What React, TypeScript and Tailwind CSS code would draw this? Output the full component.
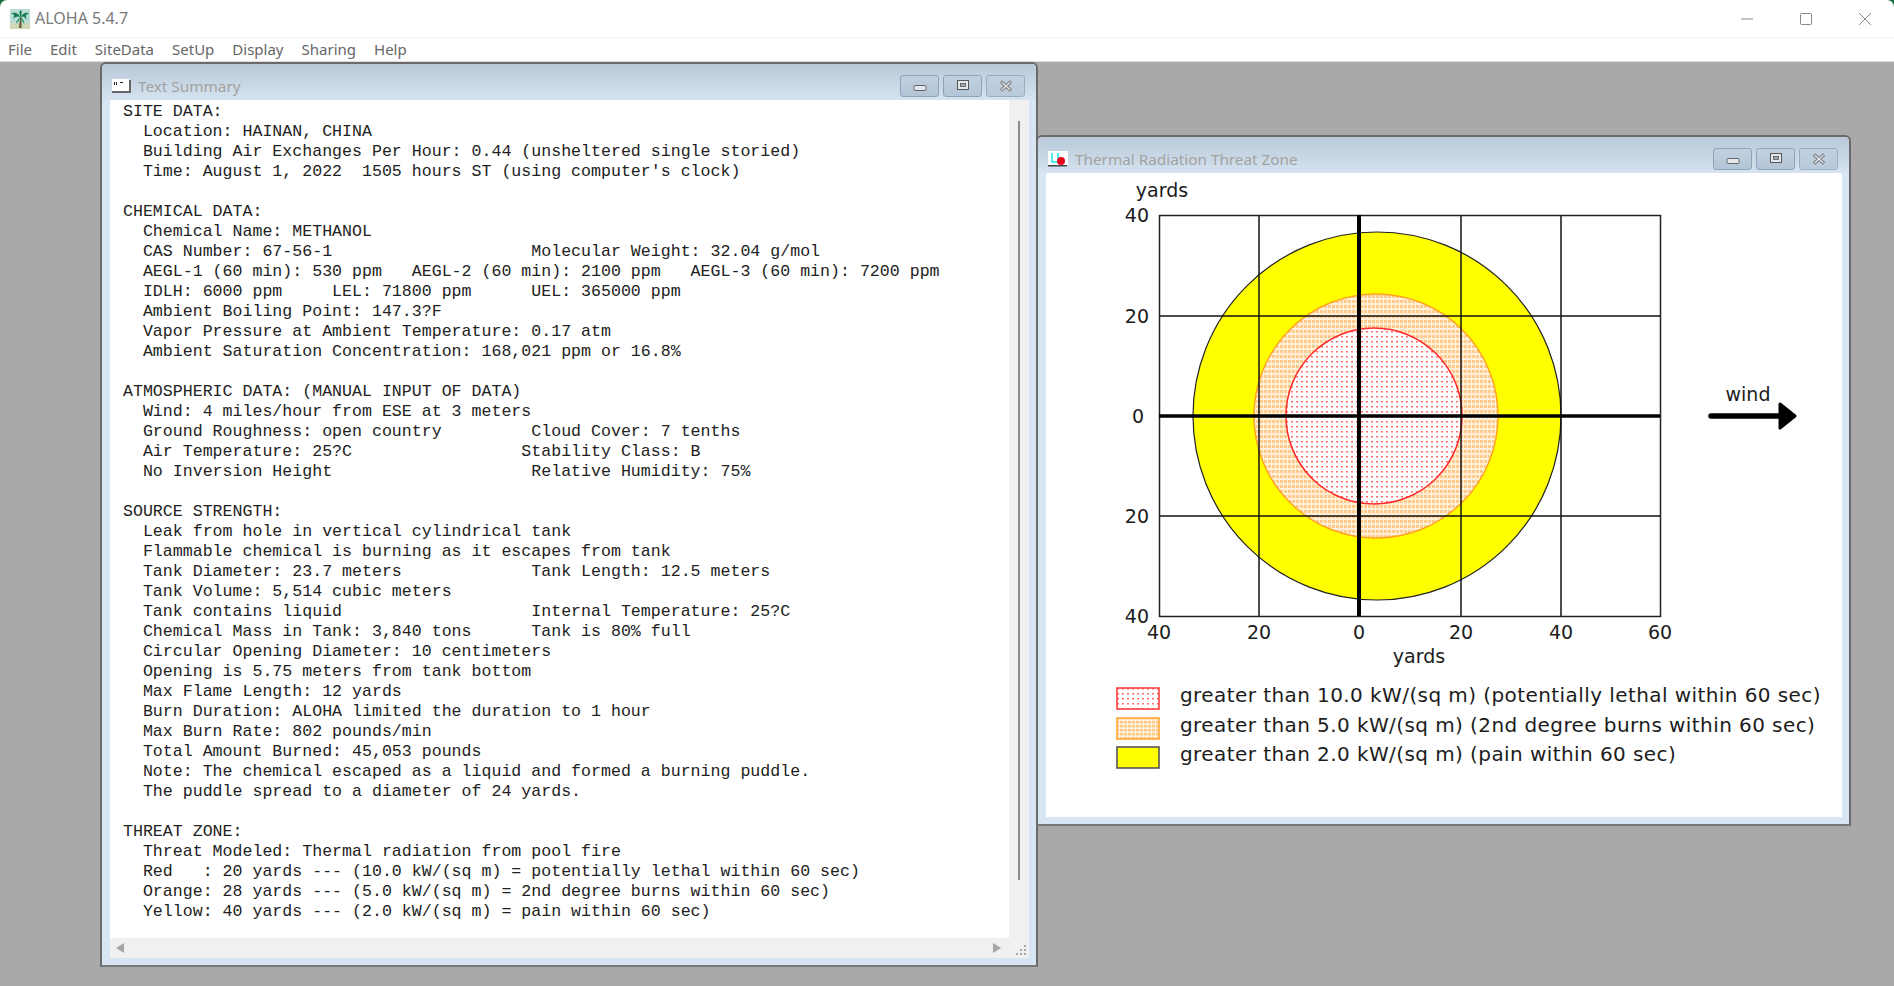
import React from "react";

const SUMMARY = [
  "SITE DATA:",
  "  Location: HAINAN, CHINA",
  "  Building Air Exchanges Per Hour: 0.44 (unsheltered single storied)",
  "  Time: August 1, 2022  1505 hours ST (using computer's clock)",
  "",
  "CHEMICAL DATA:",
  "  Chemical Name: METHANOL",
  "  CAS Number: 67-56-1                    Molecular Weight: 32.04 g/mol",
  "  AEGL-1 (60 min): 530 ppm   AEGL-2 (60 min): 2100 ppm   AEGL-3 (60 min): 7200 ppm",
  "  IDLH: 6000 ppm     LEL: 71800 ppm      UEL: 365000 ppm",
  "  Ambient Boiling Point: 147.3?F",
  "  Vapor Pressure at Ambient Temperature: 0.17 atm",
  "  Ambient Saturation Concentration: 168,021 ppm or 16.8%",
  "",
  "ATMOSPHERIC DATA: (MANUAL INPUT OF DATA)",
  "  Wind: 4 miles/hour from ESE at 3 meters",
  "  Ground Roughness: open country         Cloud Cover: 7 tenths",
  "  Air Temperature: 25?C                 Stability Class: B",
  "  No Inversion Height                    Relative Humidity: 75%",
  "",
  "SOURCE STRENGTH:",
  "  Leak from hole in vertical cylindrical tank",
  "  Flammable chemical is burning as it escapes from tank",
  "  Tank Diameter: 23.7 meters             Tank Length: 12.5 meters",
  "  Tank Volume: 5,514 cubic meters",
  "  Tank contains liquid                   Internal Temperature: 25?C",
  "  Chemical Mass in Tank: 3,840 tons      Tank is 80% full",
  "  Circular Opening Diameter: 10 centimeters",
  "  Opening is 5.75 meters from tank bottom",
  "  Max Flame Length: 12 yards",
  "  Burn Duration: ALOHA limited the duration to 1 hour",
  "  Max Burn Rate: 802 pounds/min",
  "  Total Amount Burned: 45,053 pounds",
  "  Note: The chemical escaped as a liquid and formed a burning puddle.",
  "  The puddle spread to a diameter of 24 yards.",
  "",
  "THREAT ZONE:",
  "  Threat Modeled: Thermal radiation from pool fire",
  "  Red   : 20 yards --- (10.0 kW/(sq m) = potentially lethal within 60 sec)",
  "  Orange: 28 yards --- (5.0 kW/(sq m) = 2nd degree burns within 60 sec)",
  "  Yellow: 40 yards --- (2.0 kW/(sq m) = pain within 60 sec)",
];

const MENU = ["File", "Edit", "SiteData", "SetUp", "Display", "Sharing", "Help"];
const GRID_X = [1259, 1461, 1561];
const GRID_Y = [316, 516];
const LABEL_FONT = "font-['DejaVu_Sans',sans-serif]";

const PalmIcon = () => (
  <svg width="20" height="20" viewBox="0 0 20 20" className="shrink-0">
    <rect width="20" height="20" fill="#b9dcd6" />
    <rect x="0" y="14" width="20" height="6" fill="#cfd8b4" />
    <path d="M9 19 L10 8 L11.5 8 L11.5 19 Z" fill="#6b5a3a" />
    <path d="M10.5 8 C7 3 4 3 1 5 C4 5 5 6 3 10 C6 7 8 7 10.5 8 Z" fill="#0f7d4c" />
    <path d="M10.5 8 C14 3 17 3 19 5 C16 5 15 6 17 11 C14 7 13 7 10.5 8 Z" fill="#0f7d4c" />
    <path d="M10.5 8 C9 4 9 2 11 1 C12 3 12 5 10.5 8 Z" fill="#0f7d4c" />
    <path d="M10.5 8 C8 10 6 12 6 15 C8 13 9 11 10.5 8 Z" fill="#16935a" />
    <path d="M10.5 8 C13 10 14 12 14.5 15 C12.5 13 11.5 11 10.5 8 Z" fill="#16935a" />
  </svg>
);

const NoteIcon = () => (
  <svg width="19" height="15" viewBox="0 0 19 15" className="shrink-0">
    <rect x="0" y="0" width="17" height="12" fill="#fff" />
    <rect x="2" y="3" width="1" height="3" fill="#222" />
    <rect x="4" y="3" width="1" height="3" fill="#222" />
    <rect x="8" y="3" width="3" height="1" fill="#222" />
    <rect x="0" y="12" width="19" height="2" fill="#666" />
    <rect x="17" y="1" width="2" height="12" fill="#666" />
  </svg>
);

const ThreatIcon = () => (
  <svg width="20" height="16" viewBox="0 0 20 16" className="shrink-0">
    <rect width="20" height="14" fill="#fff" />
    <path d="M4 2 V11 H11 M10 2 V11" stroke="#19e6ee" strokeWidth="1.5" fill="none" />
    <circle cx="13" cy="10" r="4" fill="#f0001c" />
    <rect y="14" width="19" height="1.5" fill="#444" />
  </svg>
);

const FrameButton = ({ kind }: { kind: "min" | "max" | "close" }) => (
  <div className={`w-[39px] h-[22px] rounded-[3px] border border-[#8fa3b8] bg-gradient-to-b from-[#c2d1e0] to-[#b3c5d8] flex items-center justify-center ${kind === "close" ? "opacity-80" : ""}`}>
    <svg width="16" height="14" viewBox="0 0 16 14">
      {kind === "min" && <rect x="2" y="6.5" width="12" height="5" rx="1" fill="#e4e8ec" stroke="#666" />}
      {kind === "max" && (
        <g>
          <rect x="2.5" y="1.5" width="11" height="9" fill="#e4e8ec" stroke="#555" />
          <rect x="5.5" y="4.5" width="5" height="3" fill="#9aa9b8" stroke="#555" strokeWidth="0.8" />
        </g>
      )}
      {kind === "close" && <path d="M3 2.5 L13 11.5 M13 2.5 L3 11.5" stroke="#666" strokeWidth="3.4" />}
      {kind === "close" && <path d="M3.6 3 L12.4 11 M12.4 3 L3.6 11" stroke="#e8e8e8" strokeWidth="1.3" />}
    </svg>
  </div>
);

const ChildWindow = ({ className, icon, title, children }: {
  className: string,
  icon: React.ReactNode,
  title: string,
  children: React.ReactNode,
}) => (
  <div className={`absolute flex flex-col bg-[#d8e5f3] border-2 border-[#6a6a6a] border-b-[#777] rounded-t-[6px] ${className}`}>
    <div className="h-[36px] shrink-0 rounded-t-[5px] bg-gradient-to-b from-[#b9c9d8] to-[#d6e3f0] flex items-center pt-[8px] pl-[10px] pr-[11px]">
      {icon}
      <span className="ml-[7px] text-[15.3px] text-[#a2a2a2] font-['Noto_Sans',sans-serif]">{title}</span>
      <div className="ml-auto flex gap-[4px] -mt-[1px]">
        <FrameButton kind="min" />
        <FrameButton kind="max" />
        <FrameButton kind="close" />
      </div>
    </div>
    <div className="flex-1 min-h-0 ml-[8px] mr-[7px] mb-[7px] bg-white">{children}</div>
  </div>
);

const Chart = () => (
  <svg width="795" height="500" viewBox="1046 173 795 500" className="block">
    <defs>
      <pattern id="redDots" width="5" height="5" patternUnits="userSpaceOnUse">
        <rect width="5" height="5" fill="#fff" />
        <rect x="1" y="1" width="2" height="1.5" fill="#ff6a6a" />
      </pattern>
      <pattern id="orangeDots" width="4" height="5" patternUnits="userSpaceOnUse">
        <rect width="4" height="5" fill="#fff0dc" />
        <rect x="0" y="0" width="3" height="3" fill="#ffca8a" />
      </pattern>
    </defs>
    <rect x="1159" y="215" width="501" height="401" fill="#fff" />
    <circle cx="1377" cy="416" r="184" fill="#ffff00" stroke="#222" strokeWidth="1.2" />
    <circle cx="1376" cy="416" r="122" fill="url(#orangeDots)" stroke="#ffa51e" strokeWidth="1.5" />
    <circle cx="1374" cy="416" r="88" fill="url(#redDots)" stroke="#ff2a2a" strokeWidth="1.5" />
    {GRID_X.map((x) => <line key={x} x1={x} x2={x} y1="215" y2="616" stroke="#111" strokeWidth="1.5" />)}
    {GRID_Y.map((y) => <line key={y} x1="1159" x2="1660" y1={y} y2={y} stroke="#111" strokeWidth="1.5" />)}
    <rect x="1159.5" y="215.5" width="501" height="401" fill="none" stroke="#222" strokeWidth="1.5" />
    <line x1="1359" x2="1359" y1="215" y2="616" stroke="#000" strokeWidth="4" />
    <line x1="1159" x2="1660" y1="416" y2="416" stroke="#000" strokeWidth="3.5" />
    <g fontSize="19" fill="#1c1c1c" fontFamily="DejaVu Sans, sans-serif">
      <text x="1162" y="197" textAnchor="middle">yards</text>
      {[["40", 1149, 215], ["20", 1149, 316], ["0", 1144, 416], ["20", 1149, 516], ["40", 1149, 616]].map(([t, x, y]) => (
        <text key={`${t}-${y}`} x={x} y={Number(y) + 7} textAnchor="end">{t}</text>
      ))}
      {[["40", 1159], ["20", 1259], ["0", 1359], ["20", 1461], ["40", 1561], ["60", 1660]].map(([t, x]) => (
        <text key={`${t}-${x}`} x={x} y="639" textAnchor="middle">{t}</text>
      ))}
      <text x="1419" y="663" textAnchor="middle">yards</text>
      <text x="1748" y="401" textAnchor="middle">wind</text>
    </g>
    <path d="M1711 416 H1782" stroke="#000" strokeWidth="5.5" strokeLinecap="round" />
    <path d="M1780 404 L1795 416 L1780 428 Z" fill="#000" stroke="#000" strokeWidth="3" strokeLinejoin="round" />
  </svg>
);

const Swatch = ({ kind }: { kind: "red" | "orange" | "yellow" }) => (
  <svg width="44" height="23" viewBox="0 0 44 23" className="shrink-0">
    <defs>
      <pattern id="swRed" width="5" height="5" patternUnits="userSpaceOnUse">
        <rect width="5" height="5" fill="#fff" />
        <rect x="1" y="1" width="2" height="1.5" fill="#ff6a6a" />
      </pattern>
      <pattern id="swOrange" width="4" height="4" patternUnits="userSpaceOnUse">
        <rect width="4" height="4" fill="#fff0dc" />
        <rect width="3" height="2.5" fill="#ffca8a" />
      </pattern>
    </defs>
    {kind === "red" && <rect x="1" y="1" width="42" height="21" fill="url(#swRed)" stroke="#ff4040" strokeWidth="1.6" />}
    {kind === "orange" && <rect x="1" y="1" width="42" height="21" fill="url(#swOrange)" stroke="#ffa733" strokeWidth="1.6" />}
    {kind === "yellow" && <rect x="1" y="1" width="42" height="21" fill="#ffff00" stroke="#555" strokeWidth="1.6" />}
  </svg>
);

const LegendRow = ({ kind, label, className }: { kind: "red" | "orange" | "yellow", label: string, className?: string }) => (
  <div className={`flex items-start gap-[20px] h-[23px] ${className ?? ""}`}>
    <Swatch kind={kind} />
    <span className={`${LABEL_FONT} text-[20px] tracking-[0.42px] leading-[16px] text-[#1c1c1c] whitespace-nowrap`}>{label}</span>
  </div>
);

export default function App() {
  return (
    <div className="relative w-[1894px] h-[986px] overflow-hidden bg-[#a9a9a9] font-['Noto_Sans',sans-serif]">
      <div className="bg-[#1b6e42]">
        <div className="h-[37px] rounded-t-[7px] bg-white flex items-center pl-[10px] text-[16px] text-[#7a7a7a]">
          <PalmIcon />
          <span className="ml-[5px] -mt-[1px]">ALOHA 5.4.7</span>
          <div className="ml-auto flex items-center gap-[47px] pr-[23px]">
            <svg width="12" height="12" viewBox="0 0 12 12"><path d="M0 6 H12" stroke="#888" /></svg>
            <svg width="12" height="12" viewBox="0 0 12 12"><rect x="0.5" y="0.5" width="11" height="11" rx="1" fill="none" stroke="#888" /></svg>
            <svg width="12" height="12" viewBox="0 0 12 12"><path d="M0 0 L12 12 M12 0 L0 12" stroke="#888" /></svg>
          </div>
        </div>
      </div>
      <div className="h-[25px] bg-white border-t border-t-[#f2f2f2] border-b border-b-[#dedede] flex items-center gap-[18px] px-[8px] pb-[1px] text-[15px] text-[#666]">
        {MENU.map((m) => <span key={m}>{m}</span>)}
      </div>

      <ChildWindow className="left-[100px] top-[62px] w-[938px] h-[905px]" icon={<NoteIcon />} title="Text Summary">
        <div className="h-full grid grid-cols-[1fr_20px] grid-rows-[1fr_20px] bg-[#f0f0f0]">
          <pre className="bg-white pl-[13px] pt-[2px] overflow-hidden font-['Liberation_Mono',monospace] text-[16.6px] leading-[20px] text-[#222]">
            {SUMMARY.join("\n")}
          </pre>
          <div className="flex justify-center pt-[21px] pb-[58px]">
            <div className="w-[2px] bg-[#8a8a8a]" />
          </div>
          <div className="flex items-center justify-between pl-[6px] pr-[8px]">
            <svg width="8" height="10" viewBox="0 0 8 10"><path d="M8 0 V10 L0 5 Z" fill="#a6a6a6" /></svg>
            <svg width="8" height="10" viewBox="0 0 8 10"><path d="M0 0 V10 L8 5 Z" fill="#a6a6a6" /></svg>
          </div>
          <div className="flex items-end justify-end p-[2px]">
            <svg width="11" height="11" viewBox="0 0 11 11" fill="#a6a6a6">
              <rect x="8" y="0" width="2" height="2" />
              <rect x="4" y="4" width="2" height="2" />
              <rect x="8" y="4" width="2" height="2" />
              <rect x="0" y="8" width="2" height="2" />
              <rect x="4" y="8" width="2" height="2" />
              <rect x="8" y="8" width="2" height="2" />
            </svg>
          </div>
        </div>
      </ChildWindow>

      <ChildWindow className="left-[1036px] top-[135px] w-[815px] h-[691px]" icon={<ThreatIcon />} title="Thermal Radiation Threat Zone">
        <Chart />
        <div className="flex flex-col pl-[70px] pt-[14px]">
          <LegendRow kind="red" label="greater than 10.0 kW/(sq m) (potentially lethal within 60 sec)" />
          <LegendRow kind="orange" label="greater than 5.0 kW/(sq m) (2nd degree burns within 60 sec)" className="mt-[7px]" />
          <LegendRow kind="yellow" label="greater than 2.0 kW/(sq m) (pain within 60 sec)" className="mt-[6px]" />
        </div>
      </ChildWindow>
    </div>
  );
}
